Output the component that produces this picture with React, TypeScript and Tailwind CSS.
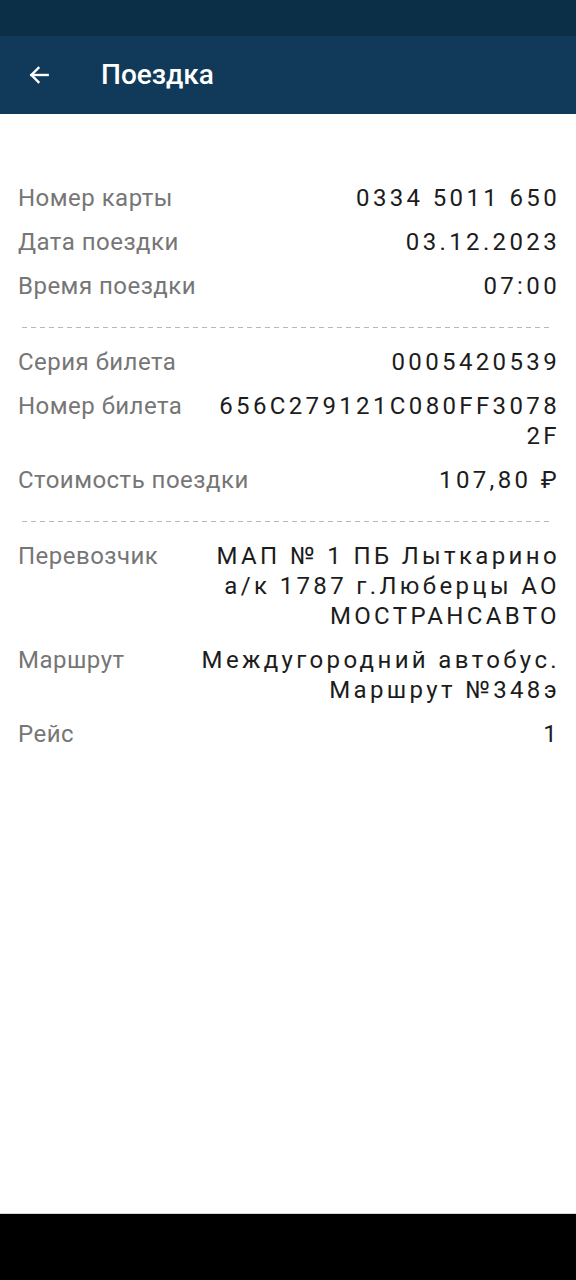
import React from "react";

type Row = { label: string; value: React.ReactNode };

const Divider = () => (
  <div className="mx-[4px] mt-[19px] mb-[12px] h-[1px] bg-[repeating-linear-gradient(90deg,#b8b8b8_0_5px,transparent_5px_9px)]" />
);

const RowItem = ({ label, value }: Row) => (
  <div className="flex items-start justify-between gap-[18px] py-[7px]">
    <div className="shrink-0 text-[24px] leading-[30px] tracking-[0.02em] text-[#767676]">{label}</div>
    <div className="-mr-[3px] min-w-0 flex-1 text-right text-[24px] leading-[30px] tracking-[0.14em] text-[#1c1c1c]">
      {value}
    </div>
  </div>
);

export default function App() {
  return (
    <div
      className="flex h-[1280px] w-[576px] flex-col bg-white"
      style={{ fontFamily: "Roboto, 'Noto Sans', sans-serif" }}
    >
      <div className="h-[36px] shrink-0 bg-[#0c2f48]" />
      <div className="flex h-[78px] shrink-0 items-center bg-[#113a5a] text-white">
        <div className="flex w-[101px] items-center pl-[26px]">
          <svg width="26" height="26" viewBox="0 0 24 24" fill="none" stroke="white" strokeWidth="2.2" strokeLinecap="square">
            <path d="M20 12H5" />
            <path d="M11.5 5.5L5 12l6.5 6.5" />
          </svg>
        </div>
        <div className="text-[28px] font-medium leading-none">Поездка</div>
      </div>

      <div className="flex-1 pl-[18px] pr-[19px] pt-[62px]">
        <RowItem label="Номер карты" value="0334 5011 650" />
        <RowItem label="Дата поездки" value="03.12.2023" />
        <RowItem label="Время поездки" value="07:00" />
        <Divider />
        <RowItem label="Серия билета" value="0005420539" />
        <RowItem
          label="Номер билета"
          value={
            <>
              <span className="block">656C279121C080FF3078</span>
              <span className="block">2F</span>
            </>
          }
        />
        <RowItem label="Стоимость поездки" value="107,80 ₽" />
        <Divider />
        <RowItem
          label="Перевозчик"
          value={
            <>
              <span className="block">МАП № 1 ПБ Лыткарино</span>
              <span className="block">а/к 1787 г.Люберцы АО</span>
              <span className="block">МОСТРАНСАВТО</span>
            </>
          }
        />
        <RowItem
          label="Маршрут"
          value={
            <>
              <span className="block">Междугородний автобус.</span>
              <span className="block">Маршрут №348э</span>
            </>
          }
        />
        <RowItem label="Рейс" value="1" />
      </div>

      <div className="h-[67px] shrink-0 border-t border-[#d6d6d6] bg-black" />
    </div>
  );
}
